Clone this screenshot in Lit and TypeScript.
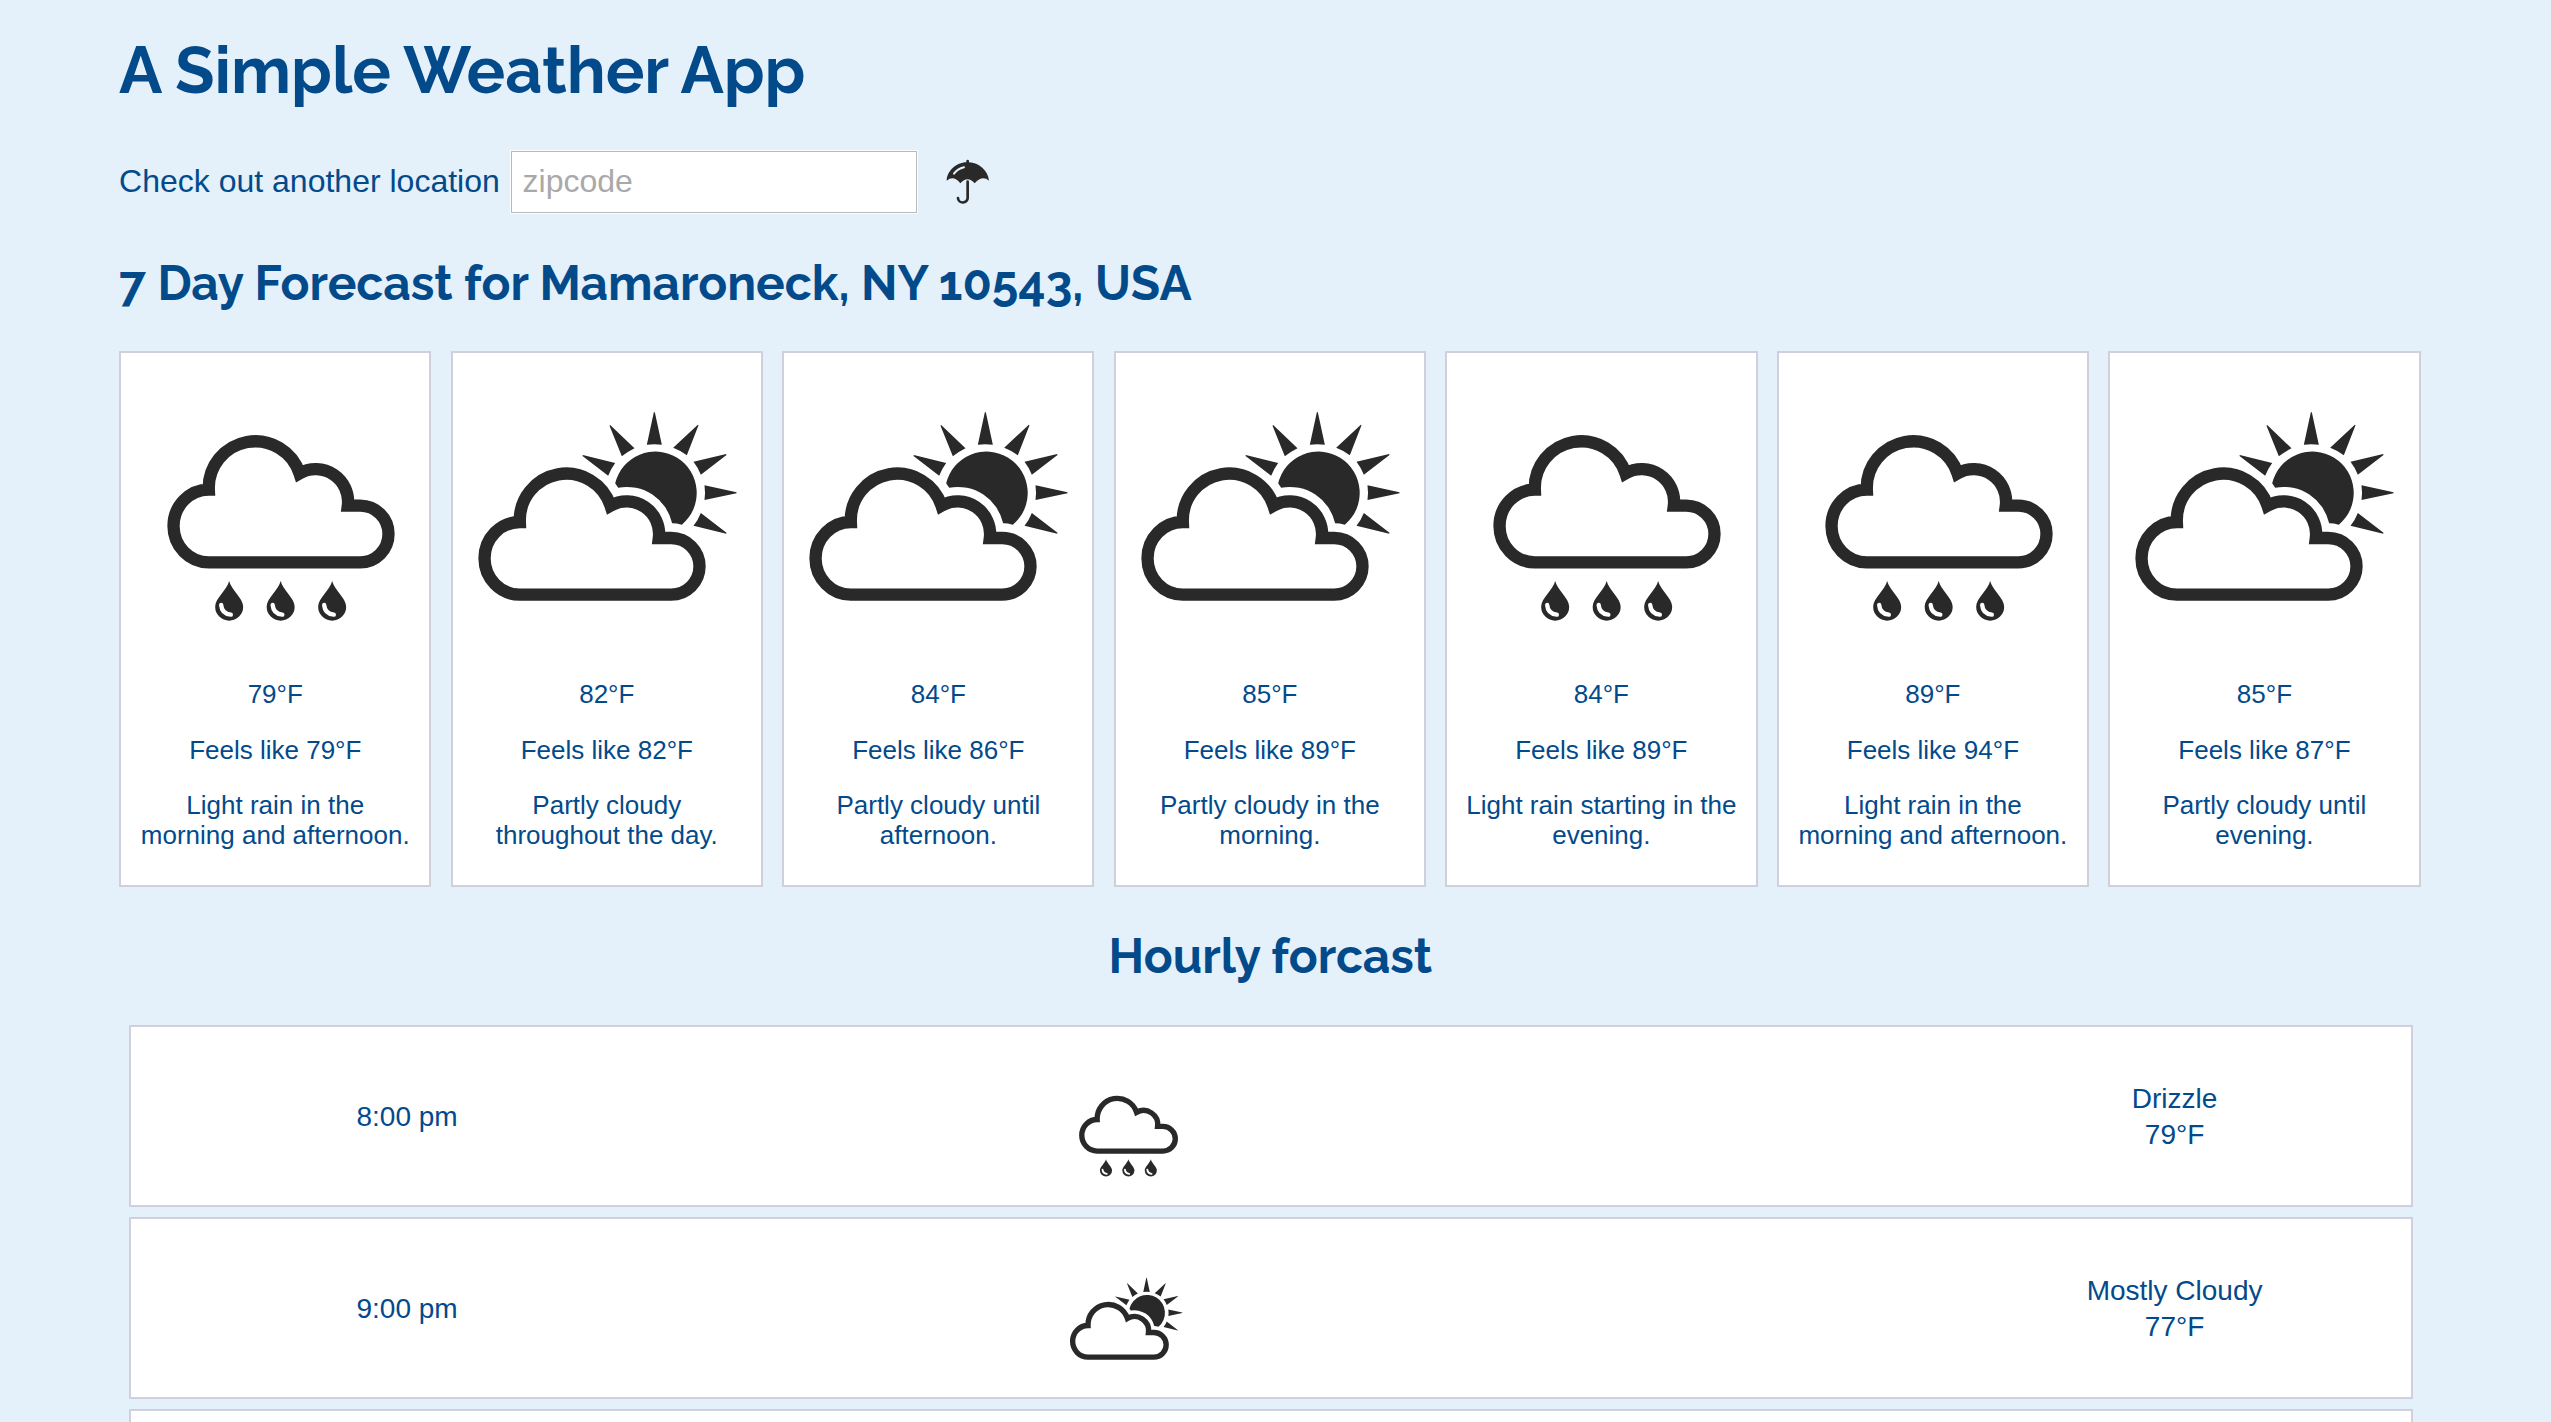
import { LitElement, html, css, svg } from "lit";
import { customElement, property, state } from "lit/decorators.js";

type Sky = "rain" | "partly";

interface Day {
  sky: Sky;
  temp: number;
  feels: number;
  summary: string;
}

interface Hour {
  time: string;
  sky: Sky;
  summary: string;
  temp: number;
}

const DAYS: Day[] = [
  { sky: "rain", temp: 79, feels: 79, summary: "Light rain in the morning and afternoon." },
  { sky: "partly", temp: 82, feels: 82, summary: "Partly cloudy throughout the day." },
  { sky: "partly", temp: 84, feels: 86, summary: "Partly cloudy until afternoon." },
  { sky: "partly", temp: 85, feels: 89, summary: "Partly cloudy in the morning." },
  { sky: "rain", temp: 84, feels: 89, summary: "Light rain starting in the evening." },
  { sky: "rain", temp: 89, feels: 94, summary: "Light rain in the morning and afternoon." },
  { sky: "partly", temp: 85, feels: 87, summary: "Partly cloudy until evening." },
];

const HOURS: Hour[] = [
  { time: "8:00 pm", sky: "rain", summary: "Drizzle", temp: 79 },
  { time: "9:00 pm", sky: "partly", summary: "Mostly Cloudy", temp: 77 },
];

const cloud = svg`<path class="outline" d="M296 667 A106 109 0 0 1 296 449 A139.5 139.5 0 0 1 568 400 A97.5 97.5 0 0 1 713 497 H750 A85 85 0 0 1 750 667 Z"/>`;

const drop = (dx: number) => svg`<g transform="translate(${dx} 0)">
  <path d="M357 723 C363 749 399 775 399 800 A42 42 0 0 1 315 800 C315 775 351 749 357 723 Z"/>
  <path class="shine" d="M333 795 Q335 821 362 824"/>
</g>`;

@customElement("weather-icon")
export class WeatherIcon extends LitElement {
  @property() sky: Sky = "rain";

  static styles = css`
    :host { display: block; }
    svg { display: block; width: 100%; height: 100%; fill: #292929; }
    .outline { fill: none; stroke: #292929; stroke-width: 37; }
    .shine { fill: none; stroke: #fff; stroke-width: 13; stroke-linecap: round; }
  `;

  render() {
    return this.sky === "rain"
      ? html`<svg viewBox="33 39 924 924">${cloud}${drop(0)}${drop(154.5)}${drop(309)}</svg>`
      : html`<svg viewBox="39 39 924 924">
          <g transform="translate(-57 97)">${cloud}</g>
          <path d="M525 430 L534 443 A140 140 0 0 1 696 550 Q710 550 725 554 A124 124 0 1 0 525 430 Z"/>
          <path d="M641 217 H644 L665 314 Q642 311 620 314 Z"/>
          <path d="M773 254 L775 256 L740 346 Q721 331 699 323 Z"/>
          <path d="M858 342 L859 345 L782 404 Q774 383 760 365 Z"/>
          <path d="M889 457 V460 L793 480 Q796 458 793 436 Z"/>
          <path d="M859 578 L858 581 L760 557 Q774 540 782 519 Z"/>
          <path d="M510 255 L508 257 L545 349 Q563 335 583 325 Z"/>
          <path d="M428 345 L427 348 L504 407 Q512 387 525 369 Z"/>
        </svg>`;
  }
}

@customElement("day-card")
export class DayCard extends LitElement {
  @property({ attribute: false }) day!: Day;

  static styles = css`
    :host {
      display: block;
      box-sizing: border-box;
      height: 536px;
      background: #fff;
      border: 2px solid #d1cfdc;
      text-align: center;
      font-size: 26px;
      line-height: 30px;
    }
    .icon { height: 308px; }
    .line { margin: 0 16px 26px; }
    .line:first-of-type { margin-top: 18px; }
    .line:nth-of-type(2) { margin-bottom: 25px; }
  `;

  render() {
    const d = this.day;
    return html`
      <weather-icon class="icon" .sky=${d.sky}></weather-icon>
      <p class="line">${d.temp}°F</p>
      <p class="line">Feels like ${d.feels}°F</p>
      <p class="line">${d.summary}</p>
    `;
  }
}

@customElement("hour-row")
export class HourRow extends LitElement {
  @property({ attribute: false }) hour?: Hour;

  static styles = css`
    :host {
      display: grid;
      grid-template-columns: 552px 1fr 472px;
      align-items: center;
      box-sizing: border-box;
      height: 182px;
      padding-top: 2px;
      background: #fff;
      border: 2px solid #d1cfdc;
      text-align: center;
      font-size: 28px;
      line-height: 36px;
    }
    .icon { width: 134px; height: 134px; margin: 20px 0 0 376px; }
  `;

  render() {
    const h = this.hour;
    if (!h) return html``;
    return html`
      <div>${h.time}</div>
      <weather-icon class="icon" .sky=${h.sky}></weather-icon>
      <div>
        <div>${h.summary}</div>
        <div>${h.temp}°F</div>
      </div>
    `;
  }
}

@customElement("app-root")
export class AppRoot extends LitElement {
  @state() private days = DAYS;
  @state() private hours = HOURS;

  static styles = css`
    :host {
      display: block;
      box-sizing: border-box;
      height: 1422px;
      overflow: hidden;
      padding: 31px 130.42px 0 119.1px;
      background: #e4f0fa;
      color: #034a8b;
      font-family: "Liberation Sans", Arial, sans-serif;
    }
    h1, h2 {
      margin: 0;
      font-family: Raleway, Lato, sans-serif;
      font-weight: 700;
      white-space: nowrap;
    }
    h1 { font-size: 64.5px; line-height: 78px; word-spacing: -1px; }
    h2 { font-size: 47.85px; line-height: 58px; }
    .search { display: flex; align-items: center; height: 64px; margin: 41px 0 40px; }
    .label { font-size: 32px; line-height: 36px; width: 391px; margin-top: -2px; }
    .zip {
      box-sizing: border-box;
      width: 408px;
      height: 64px;
      margin: 0;
      padding: 0 11.5px 1px;
      border: 1px solid #fbfdfe;
      box-shadow: inset 0 0 0 1px #b9b9b9;
      border-radius: 0;
      background: #fff;
      font: 32px "Liberation Sans", Arial, sans-serif;
      color: #034a8b;
      outline: none;
    }
    .zip::placeholder { color: #a9a9a9; opacity: 1; }
    .umbrella { width: 43.3px; height: 45.3px; margin: 0 0 0 28px; fill: #292929; }
    .handle { fill: none; stroke: #292929; stroke-width: 8; stroke-linecap: round; }
    .glint { fill: none; stroke: #e4f0fa; stroke-width: 6; stroke-linecap: round; }
    .days { display: grid; grid-template-columns: repeat(7, 1fr); gap: 19.2px; margin: 39px 0 40px; }
    .hourly { text-align: center; padding-left: 1px; }
    .hours { display: grid; gap: 10px; margin: 40px 8px 0 10px; }
  `;

  render() {
    return html`
      <h1>A Simple Weather App</h1>
      <div class="search">
        <label class="label" for="zip">Check out another location</label>
        <input class="zip" id="zip" placeholder="zipcode" />
        <svg class="umbrella" viewBox="439 88 130 136">
          <path d="M441 153 C442 122 471 98 500 97.500 V93 Q500 90 504 90 Q508 90 508 93 V97.500 C537 98 566 122 568 153 Q548 136 525 161 Q504 136 482 161 Q462 136 441 153 Z"/>
          <path class="handle" d="M504 156 V205 A14.500 13 0 0 1 475 206 V205"/>
          <path class="glint" d="M463 132 Q473 118 493 113"/>
        </svg>
      </div>
      <h2>7 Day Forecast for Mamaroneck, NY 10543, USA</h2>
      <div class="days">
        ${this.days.map((d) => html`<day-card .day=${d}></day-card>`)}
      </div>
      <h2 class="hourly">Hourly forcast</h2>
      <div class="hours">
        ${this.hours.map((h) => html`<hour-row .hour=${h}></hour-row>`)}
        <hour-row></hour-row>
      </div>
    `;
  }
}
